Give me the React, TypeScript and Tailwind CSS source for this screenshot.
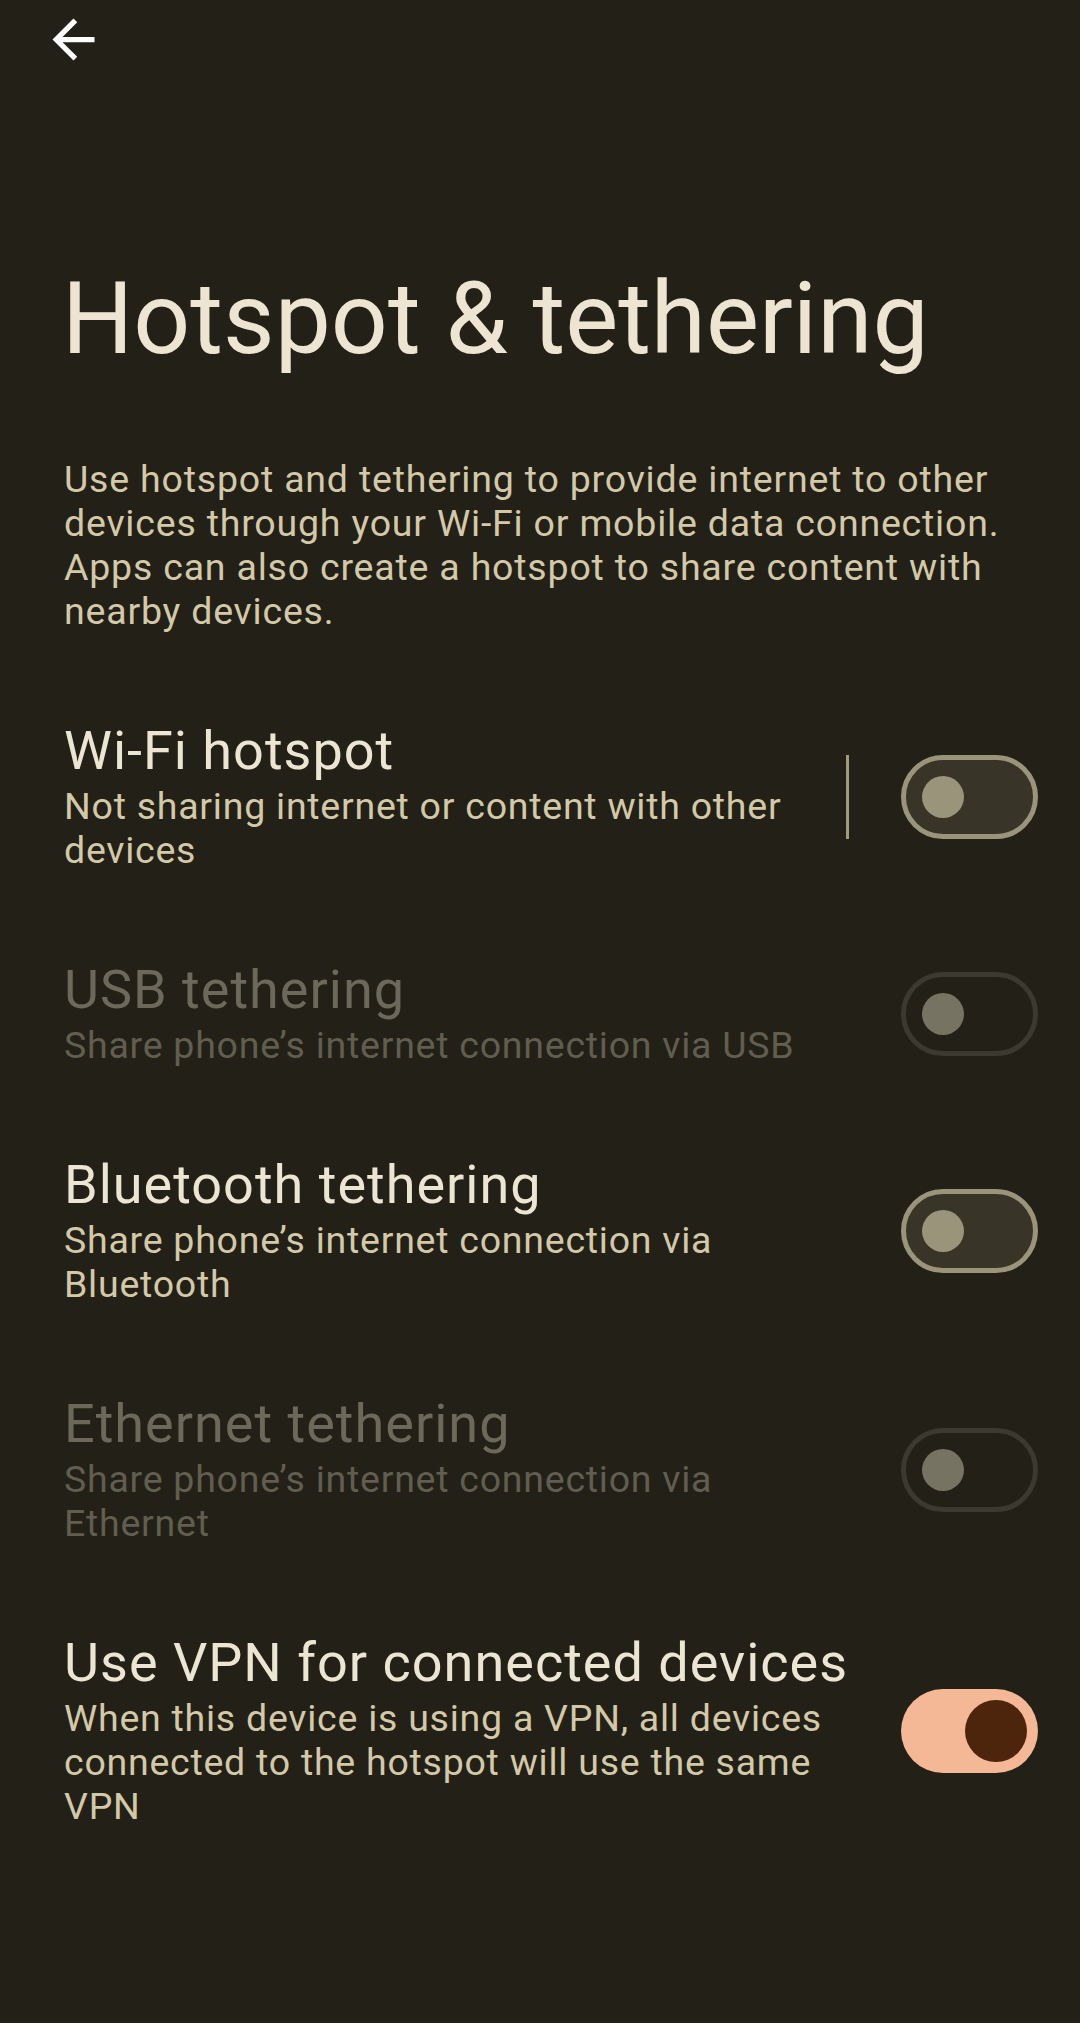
import React from "react";

type ToggleProps = { state: "off" | "disabled" | "on" };

function Toggle({ state }: ToggleProps) {
  if (state === "on") {
    return (
      <div className="flex h-[84px] w-[137px] shrink-0 items-center justify-end rounded-full bg-[#f5b896] pr-[11px]">
        <div className="h-[62px] w-[62px] rounded-full bg-[#4d250d]" />
      </div>
    );
  }
  if (state === "disabled") {
    return (
      <div className="flex h-[84px] w-[137px] shrink-0 items-center rounded-full border-[5px] border-[#3c3a2f] pl-[16px]">
        <div className="h-[42px] w-[42px] rounded-full bg-[#777362]" />
      </div>
    );
  }
  return (
    <div className="flex h-[84px] w-[137px] shrink-0 items-center rounded-full border-[5px] border-[#99947a] bg-[#383528] pl-[16px]">
      <div className="h-[42px] w-[42px] rounded-full bg-[#99947a]" />
    </div>
  );
}

type RowProps = {
  title: string;
  summary: string;
  state: "off" | "disabled" | "on";
  divider?: boolean;
};

function Row({ title, summary, state, divider }: RowProps) {
  const disabled = state === "disabled";
  return (
    <div className="flex items-center py-[44px] pl-[64px] pr-[42px]">
      <div className="min-w-0 flex-1 pr-[46px]">
        <div
          className={
            "text-[54px] leading-[60px] tracking-[1px] " +
            (disabled ? "text-[#6c685a]" : "text-[#ece5d2]")
          }
        >
          {title}
        </div>
        <div
          className={
            "mt-[3px] text-[37.5px] leading-[44px] tracking-[0.75px] " +
            (disabled ? "text-[#615d4f]" : "text-[#d3c9a9]")
          }
        >
          {summary}
        </div>
      </div>
      {divider && <div className="mr-[52px] h-[84px] w-[3px] shrink-0 bg-[#a09a7f]" />}
      <Toggle state={state} />
    </div>
  );
}

export default function App() {
  return (
    <div
      className="min-h-[2023px] w-full bg-[#222017]"
      style={{ fontFamily: "Roboto, 'Noto Sans', sans-serif" }}
    >
      <div className="pl-[42px] pt-[8px]">
        <svg width="63" height="63" viewBox="0 0 24 24" fill="#ffffff">
          <path d="M20 11H7.83l5.59-5.59L12 4l-8 8 8 8 1.41-1.41L7.83 13H20v-2z" />
        </svg>
      </div>
      <h1 className="mt-[188px] pl-[62px] text-[100px] font-normal leading-[120px] text-[#ede5d1]">
        Hotspot &amp; tethering
      </h1>
      <p className="mt-[78px] px-[64px] text-[37.5px] leading-[44px] tracking-[0.8px] text-[#d3c9a9]">
        Use hotspot and tethering to provide internet to other devices through your Wi-Fi or
        mobile data connection. Apps can also create a hotspot to share content with nearby
        devices.
      </p>
      <div className="mt-[44px] flex flex-col">
        <Row
          title="Wi-Fi hotspot"
          summary="Not sharing internet or content with other devices"
          state="off"
          divider
        />
        <Row
          title="USB tethering"
          summary="Share phone’s internet connection via USB"
          state="disabled"
        />
        <Row
          title="Bluetooth tethering"
          summary="Share phone’s internet connection via Bluetooth"
          state="off"
        />
        <Row
          title="Ethernet tethering"
          summary="Share phone’s internet connection via Ethernet"
          state="disabled"
        />
        <Row
          title="Use VPN for connected devices"
          summary="When this device is using a VPN, all devices connected to the hotspot will use the same VPN"
          state="on"
        />
      </div>
    </div>
  );
}
